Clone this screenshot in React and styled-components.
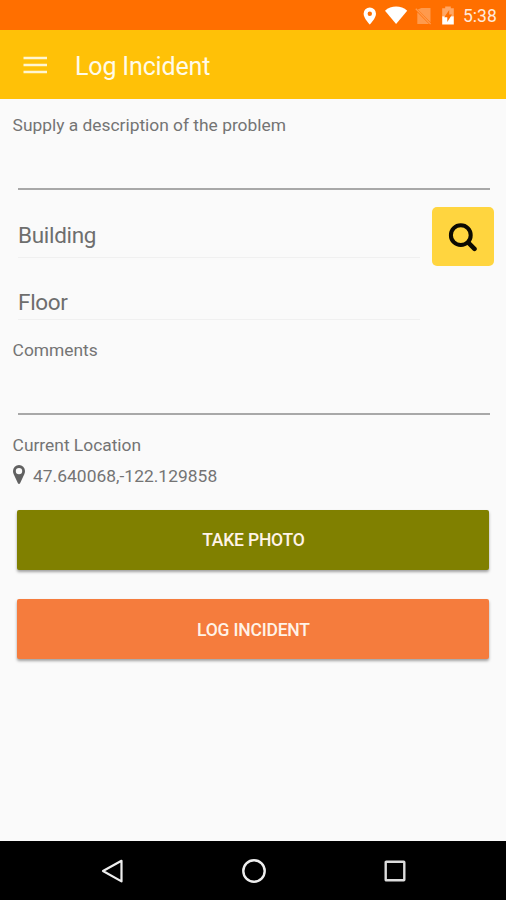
import React, { useState } from "react";
import styled, { createGlobalStyle } from "styled-components";

const GlobalStyle = createGlobalStyle`
  * {
    box-sizing: border-box;
  }

  body {
    margin: 0;
    background-color: #fafafa;
    font-family: Roboto, "Liberation Sans", sans-serif;
  }
`;

const Screen = styled.div`
  display: flex;
  flex-direction: column;
  width: 100%;
  height: 900px;
  overflow: hidden;
  background-color: #fafafa;
`;

const StatusBar = styled.div`
  flex: none;
  display: flex;
  align-items: center;
  justify-content: flex-end;
  height: 30px;
  padding-right: 9px;
  background-color: #ff6f00;
  color: #fff;
`;

const StatusIcons = styled.svg`
  display: block;
  width: 96px;
  height: 30px;
  margin-right: 9px;
`;

const Clock = styled.span`
  width: 34px;
  font-size: 17.5px;
  line-height: 30px;
  padding-top: 2px;
  color: #ffe9db;
  white-space: nowrap;
`;

const AppBar = styled.header`
  flex: none;
  display: flex;
  align-items: center;
  height: 69px;
  padding: 0 23px;
  background-color: #ffc107;
`;

const MenuButton = styled.button`
  display: flex;
  width: 52px;
  height: 30px;
  padding: 0;
  background: transparent;
  border: none;
  cursor: pointer;
`;

const Title = styled.h1`
  margin: 4px 0 0;
  font-size: 25px;
  font-weight: 400;
  line-height: 30px;
  letter-spacing: -0.15px;
  color: #fffbe9;
`;

const Form = styled.main`
  flex: 1;
  display: flex;
  flex-direction: column;
  padding: 14px 12px 0;
`;

const Label = styled.label`
  display: block;
  margin-top: ${(props) => props.$top || 0}px;
  padding-left: 0.6px;
  font-size: 17.4px;
  line-height: 24px;
  letter-spacing: -0.01px;
  color: #747474;
`;

const TextArea = styled.textarea`
  display: block;
  height: ${(props) => props.$height}px;
  margin: 0 4.5px 0 5.5px;
  padding: 8px 0;
  border: none;
  border-bottom: 2px solid #a8a8a8;
  background: transparent;
  font: inherit;
  font-size: 17px;
  resize: none;
  outline: none;
`;

const PickerRow = styled.div`
  display: flex;
  height: 59px;
  margin-top: 17px;
`;

const PickerField = styled.div`
  width: 402px;
  height: ${(props) => props.$height}px;
  margin: 0 12.5px 0 6px;
  padding-top: ${(props) => props.$pad}px;
  border-bottom: 1px solid #f0f0f0;
  font-size: 22.5px;
  line-height: 28px;
  letter-spacing: -0.3px;
  color: #6e6e6e;
`;

const SearchButton = styled.button`
  display: flex;
  align-items: center;
  justify-content: center;
  width: 62px;
  height: 59px;
  padding: 0;
  border: none;
  border-radius: 5px;
  background-color: #ffd53f;
  cursor: pointer;
`;

const Location = styled.div`
  display: flex;
  align-items: center;
  margin-top: 7px;
  height: 24px;
  padding-left: 1px;
  font-size: 17.4px;
  letter-spacing: 0.03px;
  color: #747474;

  svg {
    flex: none;
    margin: -3px 8px 0 0;
  }
`;

const ActionButton = styled.button`
  height: 60px;
  margin: ${(props) => props.$top}px 4.6px 0 5.4px;
  padding: ${(props) => props.$pad || 0}px 0 0;
  border: none;
  border-radius: 2px;
  background-color: ${(props) => props.$color};
  box-shadow: 0 2px 3px rgba(0, 0, 0, 0.36);
  font-family: inherit;
  font-size: 17.5px;
  font-weight: 500;
  letter-spacing: -0.2px;
  color: #fff3e8;
  cursor: pointer;
`;

const NavBar = styled.nav`
  flex: none;
  display: flex;
  align-items: center;
  justify-content: center;
  gap: 113px;
  height: 59px;
  padding-left: 1px;
  background-color: #000;

  svg {
    display: block;
  }
`;

function StatusBarIcons() {
  return (
    <StatusIcons viewBox="0 0 96 30">
      {/* location */}
      <path
        fill="#fff"
        fillRule="evenodd"
        d="M11.8 7.5a6.2 6.2 0 0 0-6.2 6.2c0 4.600 6.200 10.700 6.200 10.700s6.200-6.100 6.200-10.700a6.200 6.200 0 0 0-6.200-6.200zm0 4a2.200 2.200 0 1 1 0 4.400a2.200 2.200 0 0 1 0-4.400z"
      />
      {/* wifi */}
      <path fill="#fff" d="M27 10.800C33 5.200 43.200 5.200 49.200 10.800L38.100 24z" />
      {/* no sim */}
      <path fill="#ff9a4d" d="M63.300 8h9.200v14.200L59.800 9.600z" />
      <path fill="#ff9a4d" d="M59.300 12.300L71 24H59.300z" />
      <path stroke="#ff9a4d" strokeWidth="1.300" d="M57.800 8.700l14.800 15.300" />
      {/* battery */}
      <path fill="#ffa766" d="M84.200 8.200h3V6.500h5.600v1.700h3v8.300H84.200z" />
      <path fill="#fff" d="M84.200 16.300h11.600v8.200H84.200z" />
      <path fill="#ff6f00" d="M91.200 10l-5 7.300h3.100v4.600l4.700-7.300h-2.800z" />
    </StatusIcons>
  );
}

function App() {
  const [description, setDescription] = useState("");
  const [comments, setComments] = useState("");

  return (
    <Screen>
      <GlobalStyle />
      <StatusBar>
        <StatusBarIcons />
        <Clock>5:38</Clock>
      </StatusBar>
      <AppBar>
        <MenuButton>
          <svg width="24" height="30" viewBox="0 0 24 30">
            <path stroke="#fff6d2" strokeWidth="2.700" d="M0.500 8h23.500M0.500 15h23.500M0.500 22h23.500" />
          </svg>
        </MenuButton>
        <Title>Log Incident</Title>
      </AppBar>
      <Form>
        <Label htmlFor="description">Supply a description of the problem</Label>
        <TextArea
          id="description"
          $height={53}
          value={description}
          onChange={(e) => setDescription(e.target.value)}
        />
        <PickerRow>
          <PickerField $height={51} $pad={14}>Building</PickerField>
          <SearchButton>
            <svg width="30" height="30" viewBox="0 0 30 30" fill="none" stroke="#0c0a02">
              <circle cx="12.800" cy="13.200" r="9.900" strokeWidth="4" />
              <path d="M20.300 20.700l6.200 6.200" strokeWidth="4.500" strokeLinecap="round" />
            </svg>
          </SearchButton>
        </PickerRow>
        <PickerField $height={54} $pad={22}>Floor</PickerField>
        <Label htmlFor="comments" $top={18}>Comments</Label>
        <TextArea
          id="comments"
          $height={53}
          value={comments}
          onChange={(e) => setComments(e.target.value)}
        />
        <Label as="div" $top={18}>Current Location</Label>
        <Location>
          <svg width="12" height="20" viewBox="0 0 12 20">
            <path
              fill="#616161"
              fillRule="evenodd"
              d="M6 0a6 6 0 0 0-6 6c0 1.200 0.200 2 0.600 2.900L4.900 18.300c0.500 1 1.700 1 2.200 0L11.400 8.900C11.800 8 12 7.200 12 6a6 6 0 0 0-6-6zm0 2.900a3.200 3.200 0 1 1 0 6.400a3.200 3.200 0 0 1 0-6.400z"
            />
          </svg>
          <span>47.640068,-122.129858</span>
        </Location>
        <ActionButton $color="#808000" $top={22}>TAKE PHOTO</ActionButton>
        <ActionButton $color="#f57c3d" $top={29} $pad={1}>LOG INCIDENT</ActionButton>
      </Form>
      <NavBar>
        <svg width="28" height="28" viewBox="0 0 28 28" fill="none" stroke="#eee">
          <path strokeWidth="2.200" strokeLinejoin="round" d="M4 14L22.500 3.800v20.600z" />
        </svg>
        <svg width="28" height="28" viewBox="0 0 28 28" fill="none" stroke="#eee">
          <circle cx="14" cy="14" r="10.700" strokeWidth="2.400" />
        </svg>
        <svg width="28" height="28" viewBox="0 0 28 28" fill="none" stroke="#ddd">
          <rect x="4.700" y="4.700" width="18.600" height="18.600" rx="0.500" strokeWidth="2.400" />
        </svg>
      </NavBar>
    </Screen>
  );
}

export default App;
